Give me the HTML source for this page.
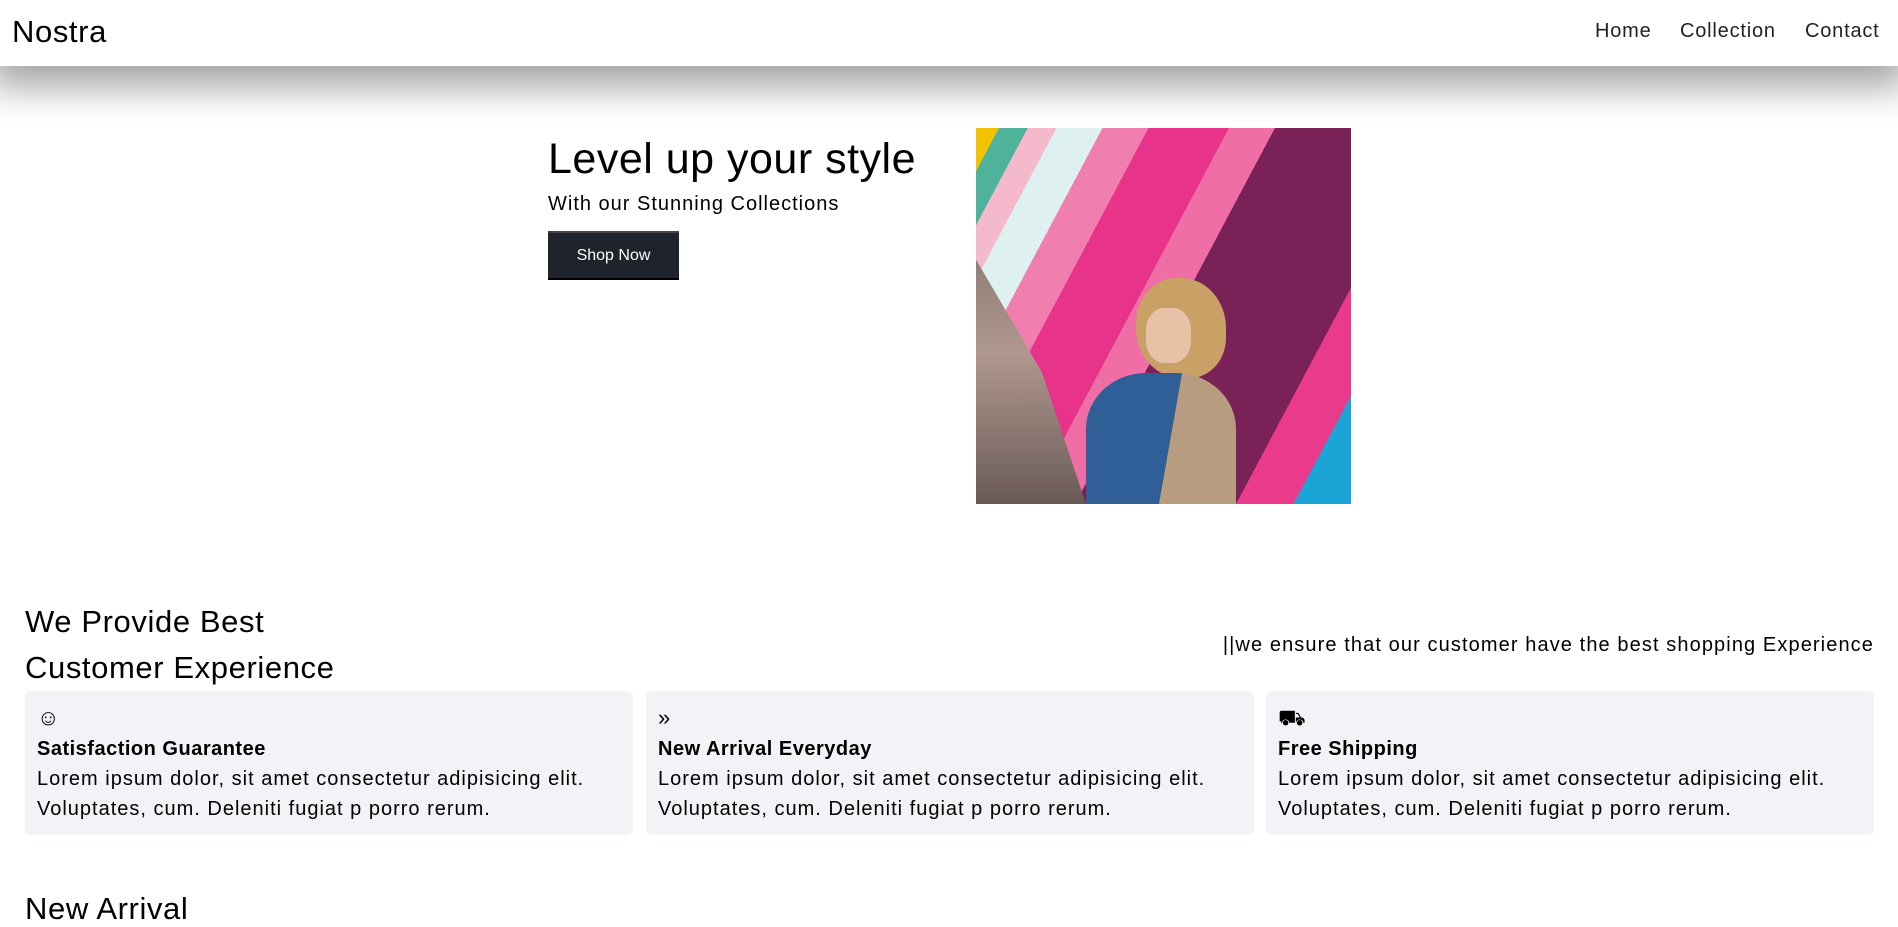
<!DOCTYPE html>
<html><head><meta charset="utf-8"><style>
*{margin:0;padding:0;box-sizing:border-box}
html,body{width:1898px;height:906px;overflow:hidden;background:#fff;font-family:"Liberation Sans",sans-serif;color:#000}
.hdr{position:absolute;left:0;top:0;width:1898px;height:66px;background:#fff;box-shadow:0 12px 36px 10px rgba(0,0,0,.35);z-index:2}
.logo{position:absolute;left:12px;top:14px;font-size:31px;letter-spacing:0.6px}
.nav{position:absolute;top:20px;font-size:20px;color:#222;letter-spacing:0.8px}
h1{position:absolute;left:548px;top:135px;font-size:43px;font-weight:normal;letter-spacing:0.5px}
.sub{position:absolute;left:548px;top:193px;font-size:20px;letter-spacing:1px}
.btn{position:absolute;left:548px;top:231px;width:131px;height:49px;background:#1f232b;border-top:2px solid #444;border-bottom:2px solid #000;color:#fff;font-size:16px;text-align:center;line-height:45px}
.img{position:absolute;left:976px;top:128px;width:375px;height:376px;overflow:hidden;
background:linear-gradient(118deg,#f2c300 0 4%,#4fb39b 4% 9%,#f5b9cc 9% 14%,#dff0f0 14% 22%,#f07fb0 22% 30%,#e8338a 30% 44%,#f06ea6 44% 52%,#7a2258 52% 80%,#e93a8c 80% 90%,#1ba5d6 90%)}
.h2{position:absolute;left:25px;font-size:31px;letter-spacing:0.6px}
.rt{position:absolute;right:24px;top:634px;font-size:20px;letter-spacing:1.1px}
.card{position:absolute;top:691px;width:608px;height:144px;background:#f2f3f6;border-radius:6px;padding:13px 12px}
.card .ic{font-size:22px;height:28px;line-height:28px}
.card b{display:block;font-size:20px;font-weight:bold;line-height:30px;margin-top:2px;letter-spacing:0.5px}
.card p{font-size:20px;line-height:30px;letter-spacing:1px}
</style></head><body>
<div class="hdr"><div class="logo">Nostra</div>
<div class="nav" style="left:1595px">Home</div>
<div class="nav" style="left:1680px">Collection</div>
<div class="nav" style="left:1805px">Contact</div></div>
<h1>Level up your style</h1>
<div class="sub">With our Stunning Collections</div>
<div class="btn">Shop Now</div>
<div class="img">
<div style="position:absolute;left:0;top:0;width:110px;height:376px;background:linear-gradient(180deg,transparent 0 30%,#8a7a70 30%,#b09890 60%,#6a5a55 100%);clip-path:polygon(0 35%,60% 65%,100% 100%,0 100%)"></div>
<div style="position:absolute;left:160px;top:150px;width:90px;height:100px;border-radius:45% 50% 40% 50%;background:#c9a066"></div>
<div style="position:absolute;left:170px;top:180px;width:45px;height:55px;border-radius:40%;background:#e8c2a6"></div>
<div style="position:absolute;left:110px;top:245px;width:150px;height:140px;border-radius:40% 40% 0 0;background:linear-gradient(100deg,#2f5f96 0 55%,#b79c80 55%)"></div>
</div>
<div class="h2" style="top:604px">We Provide Best</div>
<div class="h2" style="top:650px">Customer Experience</div>
<div class="rt">||we ensure that our customer have the best shopping Experience</div>
<div class="card" style="left:25px"><div class="ic">☺</div><b>Satisfaction Guarantee</b><p>Lorem ipsum dolor, sit amet consectetur adipisicing elit.<br>Voluptates, cum. Deleniti fugiat p porro rerum.</p></div>
<div class="card" style="left:646px"><div class="ic">»</div><b>New Arrival Everyday</b><p>Lorem ipsum dolor, sit amet consectetur adipisicing elit.<br>Voluptates, cum. Deleniti fugiat p porro rerum.</p></div>
<div class="card" style="left:1266px"><div class="ic">⛟</div><b>Free Shipping</b><p>Lorem ipsum dolor, sit amet consectetur adipisicing elit.<br>Voluptates, cum. Deleniti fugiat p porro rerum.</p></div>
<div class="h2" style="top:891px">New Arrival</div>
</body></html>
